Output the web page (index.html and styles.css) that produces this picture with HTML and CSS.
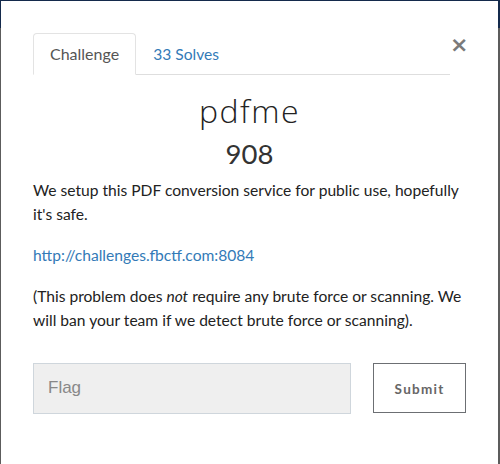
FILE: index.html
```html
<!DOCTYPE html>
<html>
<head>
<meta charset="utf-8">
<link rel="stylesheet" href="styles.css">
</head>
<body>
<div class="modal">
  <div class="head">
    <ul class="tabs">
      <li class="tab active">Challenge</li>
      <li class="tab link">33 Solves</li>
    </ul>
    <span class="close">&times;</span>
  </div>
  <h2 class="title">pdfme</h2>
  <h3 class="value">908</h3>
  <div class="desc">
    <p>We setup this PDF conversion service for public use, hopefully it's safe.</p>
    <p><a href="#">http://challenges.fbctf.com:8084</a></p>
    <p>(This problem does <em>not</em> require any brute force or scanning. We will ban your team if we detect brute force or scanning).</p>
  </div>
  <div class="form">
    <div class="flag">Flag</div>
    <div class="submit">Submit</div>
  </div>
</div>
</body>
</html>
```

FILE: styles.css
```css
html, body { margin: 0; padding: 0; }
body {
  width: 500px;
  height: 464px;
  overflow: hidden;
  background: linear-gradient(#142a4c 0, #142a4c 28px, #5c5c5c 28px);
  font-family: Lato, "Liberation Sans", sans-serif;
}
.modal {
  margin: 1px 2px 0 1px;
  height: 463px;
  background: #fff;
  padding: 32px 32px 0 32px;
  box-sizing: border-box;
}
.head {
  display: flex;
  align-items: flex-start;
}
.tabs {
  list-style: none;
  margin: 0;
  padding: 0;
  display: flex;
  flex: 1;
  border-bottom: 1px solid #dedede;
}
.tab {
  font-size: 16px;
  line-height: 20px;
  padding: 10px 16px;
  margin-bottom: -1px;
  border: 1px solid transparent;
  border-radius: 4px 4px 0 0;
}
.tab.active {
  color: #555;
  border-color: #e3e3e3 #e3e3e3 #fff;
  background: #fff;
}
.tab.link { color: #337ab7; font-size: 15.6px; }
.close {
  width: 14px;
  margin-right: 2px;
  text-align: right;
  font-family: "DejaVu Sans", sans-serif;
  font-size: 22px;
  font-weight: bold;
  line-height: 24px;
  color: #7a7a7a;
}
.title {
  margin: 16px 0 0;
  text-align: center;
  font-family: "Open Sans", sans-serif;
  font-weight: 300;
  font-size: 32px;
  line-height: 40px;
  letter-spacing: 1.5px;
  color: #222;
}
.value {
  margin: 3px 0 0;
  text-align: center;
  font-weight: 400;
  font-size: 27.5px;
  line-height: 40px;
  color: #333;
}
.desc {
  font-size: 15.6px;
  line-height: 24px;
  color: #222;
  margin-top: 4px;
}
.desc p { margin: 0 0 17px; }
.desc a { color: #337ab7; text-decoration: none; }
.form {
  display: flex;
  margin-top: 31px;
}
.flag {
  width: 319px;
  height: 51px;
  box-sizing: border-box;
  background: #efefef;
  border: 1px solid #cfd6dc;
  padding: 0 14px;
  font-family: "Liberation Sans", sans-serif;
  font-size: 17px;
  line-height: 47px;
  color: #888;
}
.submit {
  margin-left: 22px;
  width: 93px;
  height: 50px;
  box-sizing: border-box;
  border: 1px solid #6c6f73;
  text-align: center;
  font-weight: 700;
  font-size: 13.5px;
  letter-spacing: 1.3px;
  line-height: 50px;
  color: #666;
}
```
